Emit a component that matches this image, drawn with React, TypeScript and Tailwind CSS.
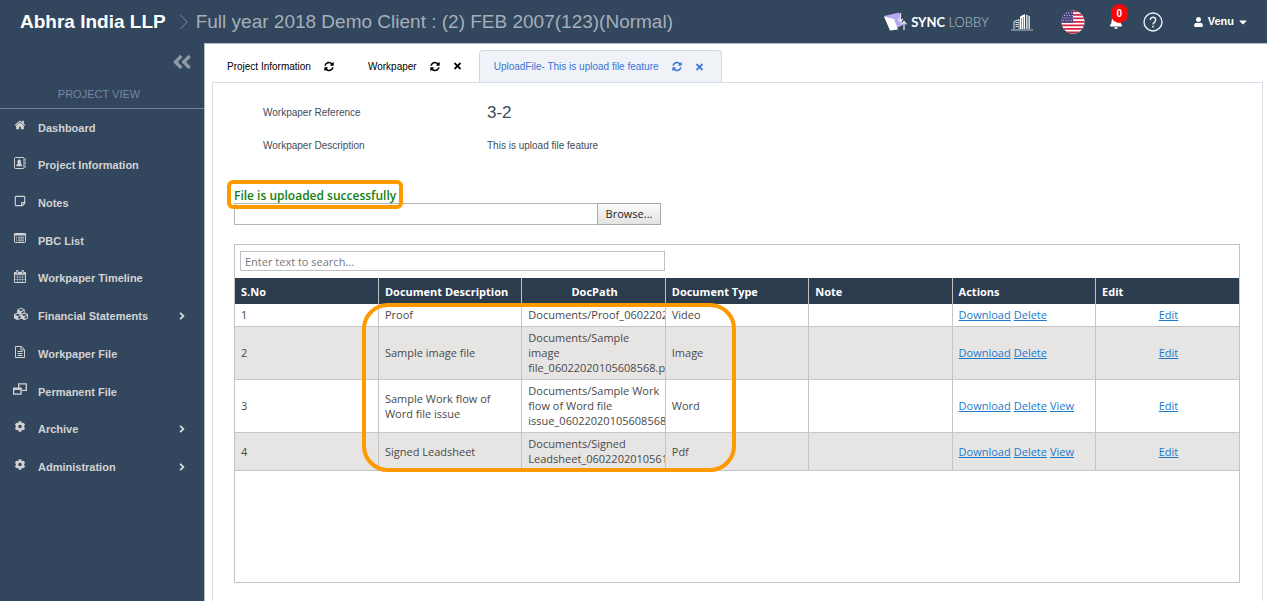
import type { ReactNode } from "react";
import {
  FaAngleDoubleLeft,
  FaAngleRight,
  FaBell,
  FaCaretDown,
  FaCog,
  FaCubes,
  FaRegStickyNote,
  FaTimes,
  FaUser,
} from "react-icons/fa";

function HomeIcon() {
  return (
    <svg viewBox="0 0 1664 1792" className="h-3 w-3" fill="currentColor" aria-hidden="true">
      <path d="M1408 992v480q0 26-19 45t-45 19h-384v-384h-256v384h-384q-26 0-45-19t-19-45v-480q0-1 .5-3t.5-3l575-474 575 474q1 2 1 6zm223-69l-62 74q-8 9-21 11h-3q-13 0-21-7l-692-577-692 577q-12 8-24 7-13-2-21-11l-62-74q-8-10-7-23.5t11-21.5l719-599q32-26 76-26t76 26l244 204v-195q0-14 9-23t23-9h192q14 0 23 9t9 23v408l219 182q10 8 11 21.5t-7 23.5z" />
    </svg>
  );
}

function CalendarIcon() {
  return (
    <svg viewBox="0 0 1664 1792" className="h-[13px] w-3" fill="currentColor" aria-hidden="true">
      <path d="M128 1664h288v-288h-288v288zm352 0h320v-288h-320v288zm-352-352h288v-320h-288v320zm352 0h320v-320h-320v320zm-352-384h288v-288h-288v288zm736 736h320v-288h-320v288zm-384-736h320v-288h-320v288zm768 736h288v-288h-288v288zm-384-352h320v-320h-320v320zm-352-864v-288q0-13-9.5-22.5t-22.5-9.5h-64q-13 0-22.5 9.5t-9.5 22.5v288q0 13 9.5 22.5t22.5 9.5h64q13 0 22.5-9.5t9.5-22.5zm736 864h288v-320h-288v320zm-384-384h320v-288h-320v288zm384 0h288v-288h-288v288zm32-480v-288q0-13-9.5-22.5t-22.5-9.5h-64q-13 0-22.5 9.5t-9.5 22.5v288q0 13 9.5 22.5t22.5 9.5h64q13 0 22.5-9.5t9.5-22.5zm384-64v1280q0 52-38 90t-90 38h-1408q-52 0-90-38t-38-90v-1280q0-52 38-90t90-38h128v-96q0-66 47-113t113-47h64q66 0 113 47t47 113v96h384v-96q0-66 47-113t113-47h64q66 0 113 47t47 113v96h128q52 0 90 38t38 90z" />
    </svg>
  );
}

function AddressBookIcon() {
  return (
    <svg viewBox="0 0 12 12" className="h-3 w-3" fill="none" stroke="currentColor" aria-hidden="true">
      <rect x="0.500" y="0.500" width="9.500" height="11" rx="1" />
      <path d="M11.300 1.500v2.300M11.300 5v2.300M11.300 8.500v2" strokeWidth="0.900" />
      <path d="M2.300 9.300c0-2 1-2.800 1.700-2.900C3 5 3.500 2.500 5.250 2.500S7.500 5 6.500 6.400c.7.100 1.700.9 1.700 2.900z" fill="currentColor" stroke="none" />
    </svg>
  );
}

function ListIcon() {
  return (
    <svg viewBox="0 0 12 10" className="h-[10px] w-3" fill="none" stroke="currentColor" aria-hidden="true">
      <rect x="0.500" y="0.500" width="11" height="9" rx="0.800" />
      <path d="M0 1.500h12" strokeWidth="2" />
      <path d="M2 4.200h1M4 4.200h6M2 6h1M4 6h6M2 7.800h1M4 7.800h6" strokeWidth="0.900" />
    </svg>
  );
}

function FileIcon() {
  return (
    <svg viewBox="0 0 12 12" className="h-3 w-3" fill="none" stroke="currentColor" aria-hidden="true">
      <path d="M1.500.5H7.500L10.500 3.500V11.500H1.500z" />
      <path d="M7 .5V4h3.500M3.500 5.500h5M3.500 7.500h5M3.500 9.500h5" />
    </svg>
  );
}

function WindowsIcon() {
  return (
    <svg viewBox="0 0 14 12" className="-ml-px h-3 w-[14px]" fill="none" stroke="currentColor" aria-hidden="true">
      <path d="M5.700 5V.8h7.600v6.500H8.500" strokeWidth="1.300" />
      <path d="M.7 5.500h7.300v5.600H.7z" strokeWidth="1.300" />
      <path d="M0 5.800h8.700" strokeWidth="2.200" />
    </svg>
  );
}

function RefreshIcon() {
  return (
    <svg viewBox="0 0 1536 1792" className="h-[11px] w-[10px]" fill="currentColor" aria-hidden="true">
      <path d="M1511 1056q0 5-1 7-64 268-268 434.5t-478 166.5q-146 0-282.5-55t-243.5-157l-129 129q-19 19-45 19t-45-19-19-45v-448q0-26 19-45t45-19h448q26 0 45 19t19 45-19 45l-137 137q71 66 161 102t187 36q134 0 250-65t186-179q11-17 53-117 8-23 30-23h192q13 0 22.5 9.5t9.5 22.5zm25-800v448q0 26-19 45t-45 19h-448q-26 0-45-19t-19-45 19-45l138-138q-148-137-349-137-134 0-250 65t-186 179q-11 17-53 117-8 23-30 23h-199q-13 0-22.5-9.5t-9.5-22.5v-7q65-268 270-434.5t480-166.5q146 0 284 55.5t245 156.5l130-129q19-19 45-19t45 19 19 45z" />
    </svg>
  );
}

function SyncLogo() {
  return (
    <svg viewBox="0 0 23 20" className="h-5 w-[23px]" aria-hidden="true">
      <path d="M0 4 15 0.500 19 13 8 18z" fill="#b3aaf0" />
      <path d="M0 4.500 10 7 14 17.500 6 18.500z" fill="#fff" />
      <path d="M16.500 1v8M14 6.800l2.500 2.700L19 6.800M20 18v-8M17.500 12.300 20 9.500l2.500 2.800" fill="none" stroke="#e8ecf0" strokeWidth="1.200" />
    </svg>
  );
}

function BuildingsIcon() {
  return (
    <svg viewBox="0 0 22 18" className="h-[18px] w-[22px]" fill="none" aria-hidden="true">
      <path d="M0 17h22" stroke="#b9c4cf" strokeWidth="1" />
      <path d="M3 16V8.500l5-2V16M4.500 9.500H7M4.500 11.500H7M4.500 13.500H7" stroke="#dfe4e9" strokeWidth="1" />
      <path d="M9 16V3.500L14 1v15z" fill="#fff" />
      <path d="M10.500 5v11M12.500 4v12" stroke="#32465d" strokeWidth="0.600" />
      <path d="M15 16V1.500l4 2V16z" fill="#cfd7df" />
      <path d="M17 3v13" stroke="#32465d" strokeWidth="0.800" />
    </svg>
  );
}

function FlagIcon() {
  return (
    <svg viewBox="0 0 24 24" className="h-6 w-6" role="img" aria-label="United States">
      <defs>
        <clipPath id="flag-circle">
          <circle cx="12" cy="12" r="11.500" />
        </clipPath>
      </defs>
      <g clipPath="url(#flag-circle)">
        <path fill="#fff" d="M0 0h24v24H0z" />
        <path
          fill="#d8213f"
          d="M0 .5h24v1.800H0zM0 4h24v1.800H0zM0 7.500h24v1.800H0zM0 11h24v1.800H0zM0 14.500h24v1.800H0zM0 18h24v1.800H0zM0 21.500h24v1.800H0z"
        />
        <path fill="#45437f" d="M0 0h12v12.800H0z" />
        <path
          stroke="#c9c8e2"
          strokeWidth="1"
          strokeDasharray="1 1.600"
          d="M2 3h10M3 5.500h9M1 8h11M2 10.500h10"
        />
      </g>
    </svg>
  );
}

function HelpIcon() {
  return (
    <svg viewBox="0 0 20 20" className="h-5 w-5" fill="none" stroke="#eef1f4" aria-hidden="true">
      <circle cx="10" cy="10" r="9" strokeWidth="1.400" />
      <path d="M7.300 8a2.700 2.700 0 1 1 4.300 2.100c-1 .7-1.600 1.200-1.600 2.400" strokeWidth="1.500" />
      <path d="M10 13.800v1.600" strokeWidth="1.600" />
    </svg>
  );
}

const navItems: { label: string; icon: ReactNode; expandable?: boolean }[] = [
  { label: "Dashboard", icon: <HomeIcon /> },
  { label: "Project Information", icon: <AddressBookIcon /> },
  { label: "Notes", icon: <FaRegStickyNote /> },
  { label: "PBC List", icon: <ListIcon /> },
  { label: "Workpaper Timeline", icon: <CalendarIcon /> },
  { label: "Financial Statements", icon: <FaCubes className="h-[14px] w-[14px]" />, expandable: true },
  { label: "Workpaper File", icon: <FileIcon /> },
  { label: "Permanent File", icon: <WindowsIcon /> },
  { label: "Archive", icon: <FaCog className="h-[11px] w-3" />, expandable: true },
  { label: "Administration", icon: <FaCog className="h-[11px] w-3" />, expandable: true },
];

const documents = [
  { id: 1, description: "Proof", path: "Documents/Proof_06022020", type: "Video", actions: ["Download", "Delete"] },
  { id: 2, description: "Sample image file", path: "Documents/Sample image file_06022020105608568.png", type: "Image", actions: ["Download", "Delete"] },
  { id: 3, description: "Sample Work flow of Word file issue", path: "Documents/Sample Work flow of Word file issue_06022020105608568.d", type: "Word", actions: ["Download", "Delete", "View"] },
  { id: 4, description: "Signed Leadsheet", path: "Documents/Signed Leadsheet_0602202010561", type: "Pdf", actions: ["Download", "Delete", "View"] },
];

const columns = ["S.No", "Document Description", "DocPath", "Document Type", "Note", "Actions", "Edit"];

function Header() {
  return (
    <header className="flex h-[43px] items-center bg-[#32465d] px-5">
      <h1 className="text-[19px] leading-6 font-bold text-white">Abhra India LLP</h1>
      <svg viewBox="0 0 8 16" className="mr-2 ml-[14px] h-4 w-2" fill="none" stroke="#7d8b9b" aria-hidden="true">
        <path d="M.5 1 7 8 .5 15" />
      </svg>
      <p className="text-[19px] leading-6 text-[#a5afba]">Full year 2018 Demo Client : (2) FEB 2007(123)(Normal)</p>
      <div className="ml-auto flex items-center">
        <a href="#sync" className="flex items-center gap-1 font-[Lato,sans-serif] text-[13px] leading-5 text-[#b9c3cd]">
          <SyncLogo />
          <span>
            <span className="font-bold text-white">SYNC</span> <span className="font-light">LOBBY</span>
          </span>
        </a>
        <button type="button" aria-label="Companies" className="ml-[22px]">
          <BuildingsIcon />
        </button>
        <button type="button" aria-label="Language" className="ml-7">
          <FlagIcon />
        </button>
        <button type="button" aria-label="Notifications" className="relative ml-6 text-white">
          <FaBell className="h-[14px] w-[14px]" />
          <span className="absolute -top-[11px] left-[2px] flex h-[19px] w-[17px] items-center justify-center rounded-full bg-[#fb0505] text-[10px] font-bold">
            0
          </span>
        </button>
        <button type="button" aria-label="Help" className="ml-5">
          <HelpIcon />
        </button>
        <button type="button" className="ml-[31px] flex items-center gap-[5px] text-[11px] font-bold text-white">
          <FaUser className="h-[10px] w-[9px]" />
          Venu
          <FaCaretDown className="h-3 w-2" />
        </button>
      </div>
    </header>
  );
}

function Sidebar() {
  return (
    <aside className="w-[204px] shrink-0 bg-[#32465d]">
      <div className="flex h-[66px] flex-col border-b border-[#6f8196]">
        <button type="button" aria-label="Collapse menu" className="mt-2 mr-3 self-end text-[#8f9ba8]">
          <FaAngleDoubleLeft className="h-[22px] w-5" />
        </button>
        <h2 className="mt-[13px] pr-[6px] text-center text-[11px] leading-4 text-[#7189a3]">PROJECT VIEW</h2>
      </div>
      <nav>
        <ul className="flex h-[377px] flex-col">
          {navItems.map((item) => (
            <li key={item.label} className="flex-1">
              <a href="#nav" className="flex h-full items-center pr-4 pl-[14px] text-[11px] font-bold text-[#d3d3d3]">
                <span className="flex w-6 pb-[5px] text-[12px]">{item.icon}</span>
                {item.label}
                {item.expandable && <FaAngleRight className="ml-auto h-3 w-3" />}
              </a>
            </li>
          ))}
        </ul>
      </nav>
    </aside>
  );
}

function Tabs() {
  return (
    <div className="flex h-[32px] text-[10px] text-black">
      <div className="flex items-center gap-[13px] pr-[17px] pl-[15px]">
        <button type="button">Project Information</button>
        <button type="button" aria-label="Refresh Project Information">
          <RefreshIcon />
        </button>
      </div>
      <div className="flex items-center gap-[13px] px-[17px]">
        <button type="button">Workpaper</button>
        <button type="button" aria-label="Refresh Workpaper">
          <RefreshIcon />
        </button>
        <button type="button" aria-label="Close Workpaper">
          <FaTimes className="h-[10px] w-[9px]" />
        </button>
      </div>
      <div className="flex items-center gap-[13px] rounded-t border border-b-0 border-[#cdd9e4] bg-[#eff3f7] pr-[17px] pl-[14px] text-[#3d74d6]">
        <button type="button">UploadFile- This is upload file feature</button>
        <button type="button" aria-label="Refresh UploadFile">
          <RefreshIcon />
        </button>
        <button type="button" aria-label="Close UploadFile">
          <FaTimes className="h-[10px] w-[9px]" />
        </button>
      </div>
    </div>
  );
}

function DocumentGrid() {
  return (
    <section className="mt-[19px] mr-[22px] h-[339px] border border-[#c3c3c3] font-['Open_Sans',sans-serif] text-[11px] leading-[15px] text-[#4a4a4a]">
      <div className="h-[33px] px-[5px] pt-[6px]">
        <input
          type="text"
          aria-label="Search documents"
          placeholder="Enter text to search..."
          className="block h-5 w-[425px] border border-[#c0c0c0] px-1 placeholder:text-[#777]"
        />
      </div>
      <div className="relative">
        <table className="w-full table-fixed border-collapse">
          <thead>
            <tr className="h-[26px] bg-[#2c3c4f] text-white">
              {columns.map((c) => (
                <th
                  key={c}
                  className={`border-r border-[#c0c0c0] pr-1 pl-[6px] font-bold last:border-r-0 ${c === "DocPath" ? "text-center" : "text-left"}`}
                >
                  {c}
                </th>
              ))}
            </tr>
          </thead>
          <tbody>
            {documents.map((d) => (
              <tr key={d.id} className="border-b border-[#c6c6c6] even:bg-[#e7e5e4] [&>td]:border-r [&>td]:border-[#c6c6c6] [&>td]:pt-[3px] [&>td]:pr-1 [&>td]:pb-1 [&>td]:pl-[6px] [&>td:last-child]:border-r-0">
                <td>{d.id}</td>
                <td>{d.description}</td>
                <td className="overflow-hidden">{d.path}</td>
                <td>{d.type}</td>
                <td />
                <td>
                  <div className="flex gap-[3px]">
                    {d.actions.map((a) => (
                      <a key={a} href="#action" className="text-[#1c7acb] underline">
                        {a}
                      </a>
                    ))}
                  </div>
                </td>
                <td className="text-center">
                  <a href="#edit" className="text-[#1c7acb] underline">
                    Edit
                  </a>
                </td>
              </tr>
            ))}
          </tbody>
        </table>
        <div className="pointer-events-none absolute top-[25px] left-[127px] h-[169px] w-[374px] rounded-[26px] border-4 border-[#ff9900]" />
      </div>
    </section>
  );
}

export default function App() {
  return (
    <div className="flex min-h-screen flex-col bg-[#32465d] font-['Liberation_Sans',sans-serif]">
      <Header />
      <div className="flex flex-1">
        <Sidebar />
        <main className="flex min-w-0 flex-1 flex-col border-t border-l border-[#b5bec8] bg-white pt-[6px] pr-1 pl-[7px]">
          <Tabs />
          <div className="flex-1 border border-b-0 border-[#d6dee7] pl-[21px]">
            <dl className="grid grid-cols-[224px_1fr] items-center pt-[13px] pl-[29px] text-[10px] text-[#3f4b57]">
              <dt className="h-[33px] leading-[33px]">Workpaper Reference</dt>
              <dd className="h-[33px] text-[17px] leading-[33px]">3-2</dd>
              <dt className="h-[33px] leading-[33px]">Workpaper Description</dt>
              <dd className="h-[33px] leading-[33px]">This is upload file feature</dd>
            </dl>
            <p className="relative mt-[26px] w-fit font-['Open_Sans',sans-serif] text-[12px] leading-[15px] font-semibold text-[#128012]">
              File is uploaded successfully
              <span className="pointer-events-none absolute -inset-x-[7px] -top-2 -bottom-[6px] rounded-[6px] border-4 border-[#ff9900]" />
            </p>
            <div className="flex h-[22px] w-[427px] font-['Open_Sans',sans-serif] text-[11px]">
              <input type="text" readOnly aria-label="Selected file" className="min-w-0 flex-1 border border-[#b5b5b5]" />
              <button
                type="button"
                className="-ml-px w-16 border border-[#a9a9a9] bg-linear-to-b from-[#fafafa] to-[#e3e3e3] text-[#222]"
              >
                Browse...
              </button>
            </div>
            <DocumentGrid />
          </div>
        </main>
      </div>
    </div>
  );
}
